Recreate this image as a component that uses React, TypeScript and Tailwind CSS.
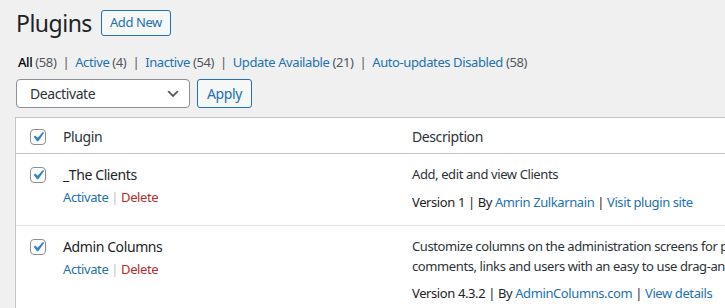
import React from 'react';

const FONT = { fontFamily: '"Noto Sans", "Open Sans", sans-serif' };

function Check() {
  return (
    <span className="relative block w-4 h-4 rounded-[4px] border border-[#8c8f94] bg-white">
      <svg viewBox="0 0 20 20" className="absolute left-[-3px] top-[-3px] w-5 h-5">
        <path d="M14.83 4.89l1.34.94-5.81 8.38H9.02L5.78 9.67l1.34-1.25 2.57 2.4z" fill="#3582c4" />
      </svg>
    </span>
  );
}

const FILTERS = [
  { label: 'All', count: 58, current: true },
  { label: 'Active', count: 4 },
  { label: 'Inactive', count: 54 },
  { label: 'Update Available', count: 21 },
  { label: 'Auto-updates Disabled', count: 58 },
];

const PLUGINS = [
  {
    name: '_The Clients',
    desc: ['Add, edit and view Clients'],
    version: '1',
    author: 'Amrin Zulkarnain',
    link: 'Visit plugin site',
  },
  {
    name: 'Admin Columns',
    desc: [
      'Customize columns on the administration screens for post(types), pages, media,',
      'comments, links and users with an easy to use drag-and-drop interface.',
    ],
    version: '4.3.2',
    author: 'AdminColumns.com',
    link: 'View details',
  },
];

export default function App() {
  return (
    <div
      className="w-[725px] h-[308px] overflow-hidden bg-[#f0f0f1] text-[13px] tracking-[-0.4px] text-[#3c434a]"
      style={FONT}
    >
      <div className="flex items-center pl-4 pt-[9px] h-[36px]">
        <h1 className="text-[23px] leading-[26px] text-[#1d2327] font-normal tracking-[-0.5px]">Plugins</h1>
        <button className="ml-[9px] h-[26px] px-[8px] rounded-[3px] border border-[#2271b1] bg-[#f6f7f7] text-[#2271b1] text-[13px] leading-none">
          Add New
        </button>
      </div>

      <ul className="flex items-center pl-[18px] mt-[17px] h-[18px] leading-[18px] text-[#50575e]">
        {FILTERS.map((f, i) => (
          <li key={f.label} className="flex items-center whitespace-pre">
            {i > 0 && <span className="mx-[6px] text-[#50575e]">|</span>}
            <span className={f.current ? 'text-black font-medium' : 'text-[#2271b1]'}>{f.label}</span>
            <span> ({f.count})</span>
          </li>
        ))}
      </ul>

      <div className="flex items-center gap-[7px] pl-4 mt-[8px]">
        <div className="relative w-[174px] h-[29px] rounded-[4px] border border-[#8c8f94] bg-white flex items-center pl-[13px] text-[14px] text-[#2c3338]">
          Deactivate
          <svg viewBox="0 0 20 20" className="absolute right-[8px] top-[6px] w-4 h-4">
            <path d="M5 6l5 5 5-5 2 1-7 7-7-7 2-1z" fill="#555" />
          </svg>
        </div>
        <button className="h-[29px] w-[55px] rounded-[3px] border border-[#2271b1] bg-[#f6f7f7] text-[#2271b1] text-[14px]">
          Apply
        </button>
      </div>

      <div className="ml-[15px] mt-[9px] w-[960px] border border-[#c3c4c7] bg-white">
        <div className="flex h-[36px] items-center border-b border-[#c3c4c7] text-[#2c3338] text-[14px]">
          <div className="w-[37px] pl-[14px] pt-[2px]">
            <Check />
          </div>
          <div className="w-[349px] pl-[10px] pt-[2px]">Plugin</div>
          <div className="pl-[10px] pt-[2px]">Description</div>
        </div>

        {PLUGINS.map((p) => (
          <div key={p.name} className="flex border-b border-[#e5e5e5] pb-[13px]">
            <div className="w-[37px] pl-[14px] pt-[13px]">
              <Check />
            </div>
            <div className="w-[349px] pl-[10px] pt-[11px]">
              <div className="text-[14px] leading-[20px] text-[#1d2327]">{p.name}</div>
              <div className="mt-[2px] leading-[20px] flex items-center">
                <span className="text-[#2271b1]">Activate</span>
                <span className="mx-[3px] text-[#c3c4c7]">|</span>
                <span className="text-[#b32d2e]">Delete</span>
              </div>
            </div>
            <div className="pl-[10px] pt-[11px] text-[#2c3338] whitespace-nowrap">
              {p.desc.map((d) => (
                <div key={d} className="leading-[19.5px]">
                  {d}
                </div>
              ))}
              <div className="mt-[8px] leading-[19.5px] text-[#1d2327]">
                Version {p.version} | By <span className="text-[#2271b1]">{p.author}</span> |{' '}
                <span className="text-[#2271b1]">{p.link}</span>
              </div>
            </div>
          </div>
        ))}
      </div>
    </div>
  );
}
